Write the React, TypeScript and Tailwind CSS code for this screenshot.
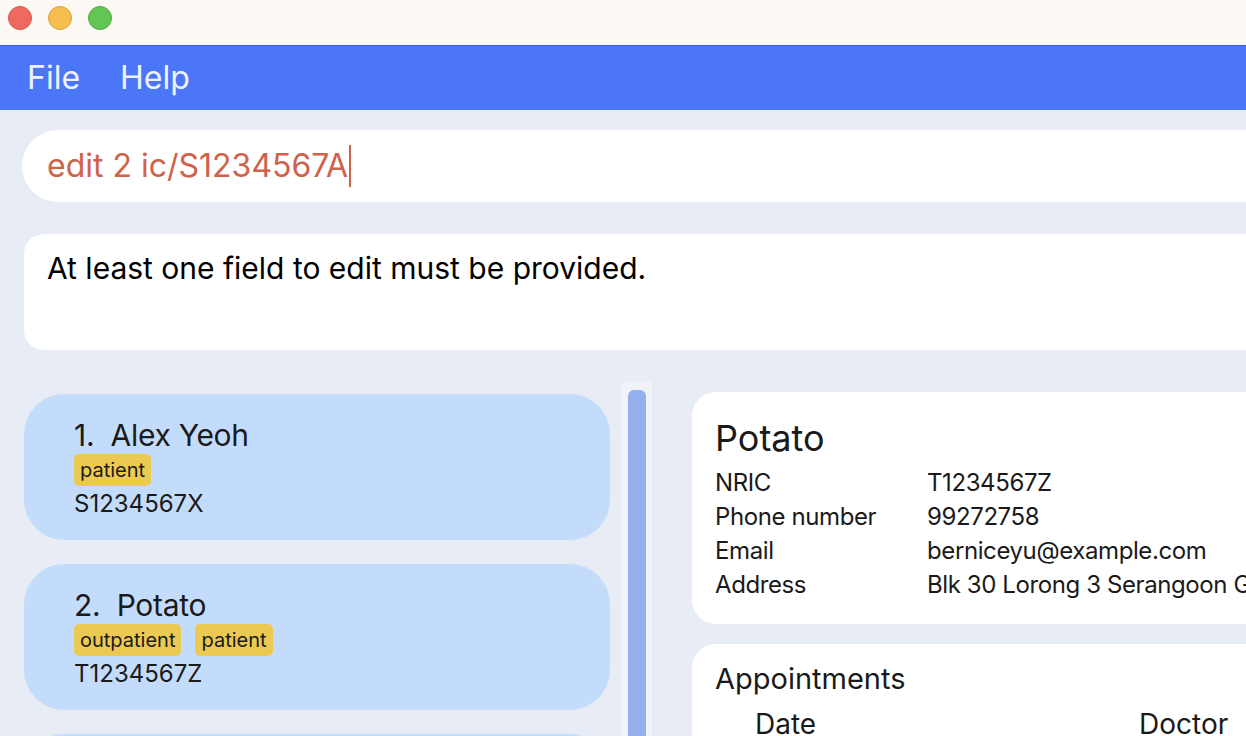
import React from "react";

const font = { fontFamily: "Inter, 'Noto Sans', sans-serif" };

interface Patient {
  index: number;
  name: string;
  tags: string[];
  nric: string;
}

const patients: Patient[] = [
  { index: 1, name: "Alex Yeoh", tags: ["patient"], nric: "S1234567X" },
  { index: 2, name: "Potato", tags: ["outpatient", "patient"], nric: "T1234567Z" },
];

const details: [string, string][] = [
  ["NRIC", "T1234567Z"],
  ["Phone number", "99272758"],
  ["Email", "berniceyu@example.com"],
  ["Address", "Blk 30 Lorong 3 Serangoon Gardens, #07-18"],
];

const PatientCard: React.FC<{ p: Patient }> = ({ p }) => (
  <div className="h-[146px] shrink-0 rounded-[40px] bg-[#c4dcfc] pl-[50px] pt-[22px] text-[#1a1a1a]">
    <div className="h-[38px] whitespace-pre text-[30px] leading-[38px] tracking-[-0.3px]">
      {p.index}.  {p.name}
    </div>
    <div className="flex h-[32px] gap-[14px]">
      {p.tags.map((t) => (
        <span
          key={t}
          className="flex h-[32px] items-center rounded-[5px] bg-[#ecca52] px-[6px] text-[20px] leading-none"
        >
          {t}
        </span>
      ))}
    </div>
    <div className="text-[24px] leading-[36px]">{p.nric}</div>
  </div>
);

export default function App() {
  return (
    <div
      className="flex h-[736px] w-[1246px] flex-col overflow-hidden bg-[#e8ecf5]"
      style={font}
    >
      {/* title bar */}
      <div className="flex h-[45px] shrink-0 items-start gap-[16px] bg-[#fcf9f5] pl-[8px] pt-[6px]">
        <span className="h-[24px] w-[24px] rounded-full border border-[#d9534a] bg-[#ee6a5f]" />
        <span className="h-[24px] w-[24px] rounded-full border border-[#dba33c] bg-[#f5be4f]" />
        <span className="h-[24px] w-[24px] rounded-full border border-[#50a844] bg-[#62c554]" />
      </div>

      {/* menu bar */}
      <div className="flex h-[65px] shrink-0 items-center gap-[40px] border-t border-[#3a5fd4] bg-[#4b76f7] pl-[27px] text-[32px] leading-none text-[#eef2fe]">
        <span>File</span>
        <span>Help</span>
      </div>

      {/* command box */}
      <div className="ml-[22px] mt-[20px] flex h-[72px] w-[1300px] shrink-0 items-center rounded-l-full bg-white pl-[25px]">
        <span className="text-[32px] leading-none text-[#cf624b]">edit 2 ic/S1234567A</span>
        <span className="ml-[1px] h-[42px] w-[2px] bg-[#cf624b]" />
      </div>

      {/* result box */}
      <div className="ml-[24px] mt-[32px] h-[116px] w-[1300px] shrink-0 rounded-[20px] bg-white pl-[23px] pt-[15px] text-[30px] leading-[38px] text-black">
        At least one field to edit must be provided.
      </div>

      {/* main area */}
      <div className="mt-[32px] flex min-h-0 flex-1">
        {/* list */}
        <div className="ml-[24px] mt-[12px] flex w-[586px] shrink-0 flex-col gap-[24px]">
          {patients.map((p) => (
            <PatientCard key={p.index} p={p} />
          ))}
          <div className="h-[146px] shrink-0 rounded-[40px] bg-[#c4dcfc]" />
        </div>

        {/* scrollbar */}
        <div className="ml-[12px] w-[30px] shrink-0 bg-[#f1f3f9] px-[6px] pt-[8px]">
          <div className="h-full rounded-t-[6px] bg-[#94b1ee]" />
        </div>

        {/* detail */}
        <div className="ml-[40px] mt-[10px] flex w-[620px] shrink-0 flex-col gap-[20px]">
          <div className="h-[232px] shrink-0 rounded-[24px] bg-white pl-[23px] pt-[26px] text-[#1a1a1a]">
            <div className="mb-[8px] text-[36px] leading-[40px]">Potato</div>
            {details.map(([k, v]) => (
              <div
                key={k}
                className="flex h-[34px] items-center text-[24px] leading-none tracking-[-0.4px]"
              >
                <span className="w-[212px] shrink-0">{k}</span>
                <span className="whitespace-nowrap">{v}</span>
              </div>
            ))}
          </div>
          <div className="flex-1 rounded-t-[24px] bg-white pl-[23px] pt-[18px] text-[#1a1a1a]">
            <div className="text-[29px] leading-[34px]">Appointments</div>
            <div className="mt-[10px] flex text-[28px] leading-[36px]">
              <span className="ml-[40px] w-[384px] shrink-0">Date</span>
              <span>Doctor</span>
            </div>
          </div>
        </div>
      </div>
    </div>
  );
}
